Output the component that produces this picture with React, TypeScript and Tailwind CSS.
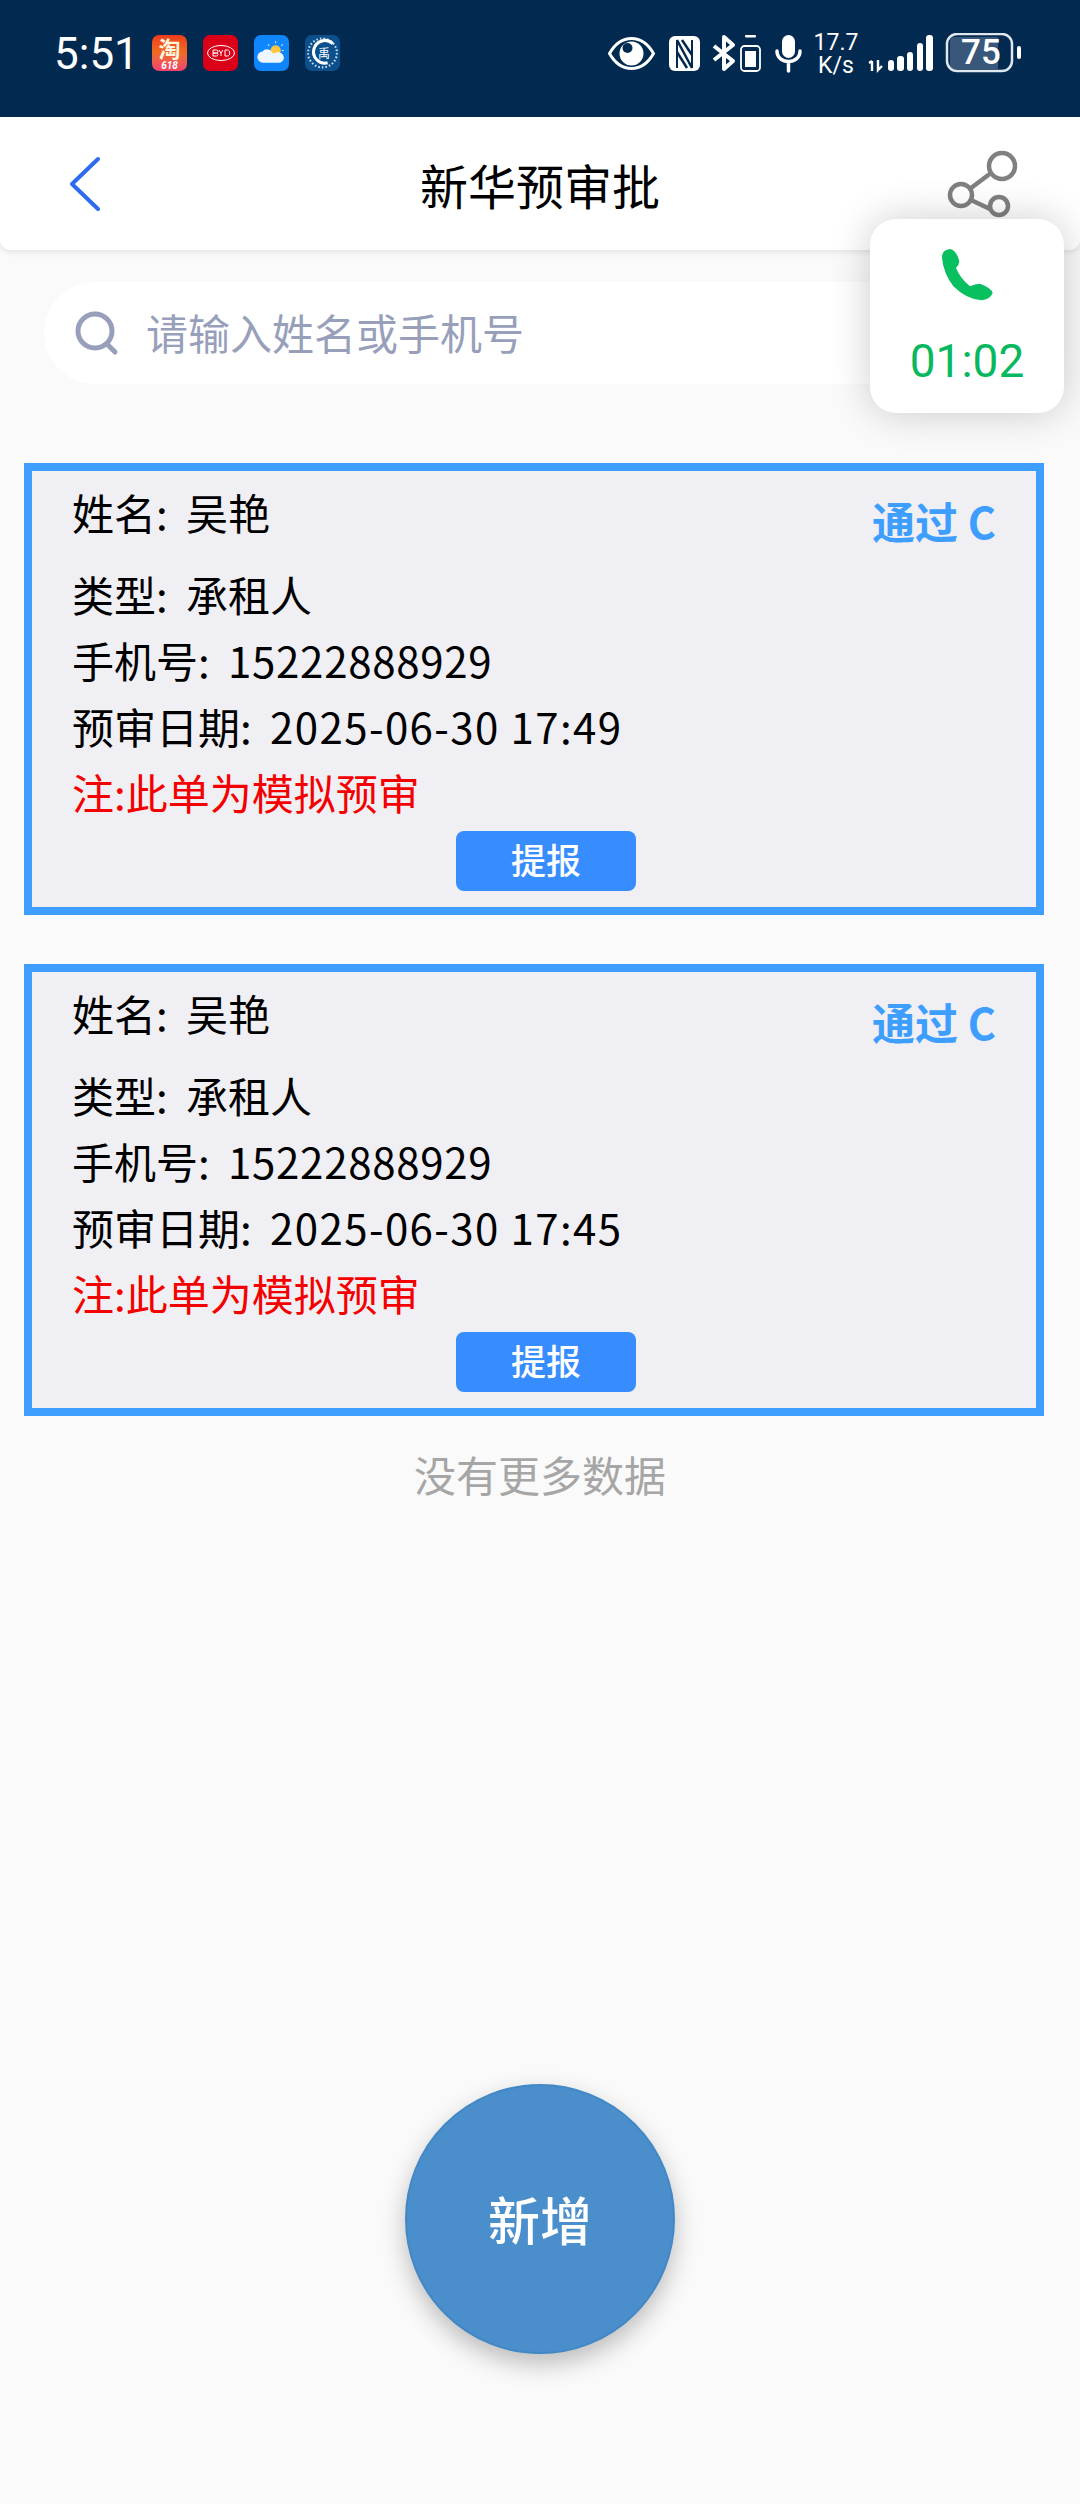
const CJK = { fontFamily: '"Noto Sans CJK SC", "Noto Sans", sans-serif' };

function AppIcon({ className, children }: { className: string; children?: React.ReactNode }) {
  return <div className={`w-[35px] h-[36px] rounded-[7px] relative flex items-center justify-center ${className}`}>{children}</div>;
}

function StatusBar() {
  return (
    <div className="h-[117px] bg-[#02294f] flex items-start text-white relative shrink-0">
      <div className="flex items-center pl-[54px] pt-[33px] h-[72px]">
        <span className="text-[44px] leading-none font-normal w-[98px] mt-[3px]" style={{ fontFamily: 'Roboto, sans-serif' }}>5:51</span>
        <div className="flex gap-[16px]">
          <AppIcon className="bg-gradient-to-b from-[#ee3a1c] via-[#f06a22] to-[#f0426c]">
            <span className="absolute top-0 text-[22px] leading-[25px] font-bold text-[#fff4df]" style={CJK}>淘</span>
            <span className="absolute bottom-0 text-[10px] leading-[10px] italic font-bold" style={{ fontFamily: 'Roboto, sans-serif' }}>618</span>
          </AppIcon>
          <AppIcon className="bg-[#d90018]">
            <svg width="30" height="18" viewBox="0 0 30 18"><ellipse cx="15" cy="9" rx="13.5" ry="7.5" fill="none" stroke="#fff" strokeWidth="1" /><path d="M7 6h3.500a1.500 1.500 0 0 1 0 3H7zm0 3h3.500a1.500 1.500 0 0 1 0 3H7zM13 6l2 3 2-3M15 9v3M19 6h2.500c3 0 3 6 0 6H19z" fill="none" stroke="#fff" strokeWidth="1" /></svg>
          </AppIcon>
          <AppIcon className="bg-[#0f86fb]">
            <svg width="35" height="36" viewBox="0 0 34 35"><circle cx="21" cy="15" r="5" fill="#fcc63f" /><path d="M21 6v2M13.500 9l1.300 1.500M28 9l-1.500 1.500M27 15h2" stroke="#cfe6ff" strokeWidth="1" /><path d="M9 27a5.500 5.500 0 0 1-.5-11c1.500-3 6.500-3 8.500 0 1 2 2 2 3 1.500 4-2 9 .5 9 4.500a5 5 0 0 1-5 5z" fill="#eef7ff" /></svg>
          </AppIcon>
          <AppIcon className="bg-[#0b4f8d]">
            <svg width="35" height="36" viewBox="0 0 34 35"><circle cx="17" cy="17.500" r="14" fill="none" stroke="#cfe2f2" strokeWidth="2" strokeDasharray="1.500 2" /><path d="M27 8.500A11 11 0 1 0 22 27" fill="none" stroke="#fff" strokeWidth="3" /></svg>
            <span className="absolute text-[12px] leading-none left-[13px] top-[12px]" style={CJK}>禹</span>
          </AppIcon>
        </div>
      </div>
      <div className="absolute left-[608px] top-[33px] w-[420px] h-[48px]">
        <svg width="420" height="48" viewBox="0 0 420 48" fill="none">
          <path d="M1.500 20.500C8 9 16 5.500 23.500 5.500S39 9 45.500 20.500C39 32 31 35.500 23.500 35.500S8 32 1.500 20.500Z" stroke="#fff" strokeWidth="3" />
          <circle cx="23.500" cy="20.500" r="12" fill="#fff" />
          <circle cx="19.500" cy="15" r="5" fill="#02294f" />
          <rect x="61" y="3" width="31" height="35" rx="6" fill="#fff" />
          <path d="M69 35V7M84 35V7" stroke="#02294f" strokeWidth="2" />
          <path d="M69 7l15 28M74 7l10 15M69 19l10 16" stroke="#02294f" strokeWidth="2.500" />
          <path d="M106 13l19 15-9 8V4l9 8-19 15" stroke="#fff" strokeWidth="4" strokeLinejoin="round" />
          <rect x="133" y="13" width="19" height="25" rx="3.500" stroke="#fff" strokeWidth="1.800" />
          <rect x="137" y="18" width="11" height="16" fill="#fff" />
          <rect x="137" y="2" width="11" height="2.500" rx="1" fill="#fff" />
          <rect x="174" y="2" width="13" height="23" rx="6.500" fill="#fff" />
          <path d="M169 18c0 14 23 14 23 0M180.500 29v9" stroke="#fff" strokeWidth="3.500" strokeLinecap="round" />
          <path d="M264 28v10M261 30l3-2M270 27v10l4-4" stroke="#fff" strokeWidth="2.400" />
          <rect x="280" y="27" width="6" height="11" rx="3" fill="#fff" />
          <rect x="289" y="23" width="7" height="15" rx="3" fill="#fff" />
          <rect x="299" y="19" width="6" height="19" rx="3" fill="#fff" />
          <rect x="309" y="10" width="6" height="28" rx="3" fill="#fff" />
          <rect x="318" y="2" width="7" height="36" rx="3" fill="#fff" />
          <path d="M346 4h44v32h-44a4 4 0 0 1-4-4V8a4 4 0 0 1 4-4z" fill="#39577a" />
          <rect x="339" y="1" width="65" height="37" rx="10" stroke="#dfe6ee" strokeWidth="2.500" />
          <rect x="409" y="13" width="4" height="13" rx="2" fill="#fff" />
        </svg>
        <span className="absolute left-[202px] top-[-2px] text-[23px] leading-[23px] text-center w-[52px]" style={{ fontFamily: 'Roboto, sans-serif' }}>17.7<br />K/s</span>
        <span className="absolute left-[353px] top-[1px] text-[35px] leading-[37px] font-medium" style={{ fontFamily: 'Roboto, sans-serif' }}>75</span>
      </div>
    </div>
  );
}

function Header() {
  return (
    <div className="h-[133px] bg-white rounded-b-[10px] shadow-[0_2px_6px_rgba(0,0,0,0.10)] flex items-center justify-between pl-[68px] pr-[60px] shrink-0 relative">
      <svg width="36" height="56" viewBox="0 0 36 56" fill="none"><path d="M30 3L4 28l26 25" stroke="#2d6bf0" strokeWidth="4" strokeLinecap="round" strokeLinejoin="round" /></svg>
      <span className="absolute left-0 right-0 text-center text-[48px] leading-none text-black" style={CJK}>新华预审批</span>
      <svg width="74" height="74" viewBox="0 0 74 74" fill="none" className="mt-[3px]"><circle cx="56" cy="18" r="13" stroke="#808080" strokeWidth="4.500" /><circle cx="15" cy="47" r="11" stroke="#808080" strokeWidth="4.500" /><circle cx="53" cy="58" r="9" stroke="#808080" strokeWidth="4.500" /><path d="M45 25L25 40M25 52l19 9" stroke="#808080" strokeWidth="4.500" /></svg>
    </div>
  );
}

function Card({ date }: { date: string }) {
  return (
    <div className="ml-[24px] mr-[36px] h-[452px] border-[8px] border-[#3d9efe] bg-[#f0eff4] pl-[40px] pr-[40px] relative text-black text-[42px]" style={CJK}>
      <div className="flex justify-between">
        <div className="leading-[66px] pt-[8px]">姓名: <span className="ml-[9px]">吴艳</span></div>
        <div className="text-[#3d9efe] font-bold leading-[66px] pt-[16px] text-[43px]">通过 C</div>
      </div>
      <div className="mt-[8px] leading-[66px]">类型: <span className="ml-[9px]">承租人</span></div>
      <div className="leading-[66px]">手机号: <span className="ml-[9px] tracking-[0.700px]">15222888929</span></div>
      <div className="leading-[66px]">预审日期: <span className="ml-[9px] tracking-[1.400px]">{date}</span></div>
      <div className="leading-[66px] text-[#f50000]">注:此单为模拟预审</div>
      <div className="flex justify-center mt-[6px] ml-[24px]">
        <div className="w-[180px] h-[60px] rounded-[8px] bg-[#378dfe] text-white text-[35px] font-medium flex items-center justify-center pb-[3px]">提报</div>
      </div>
    </div>
  );
}

export default function App() {
  return (
    <div className="w-[1080px] h-[2504px] bg-[#fafafa] flex flex-col relative overflow-hidden" style={CJK}>
      <StatusBar />
      <Header />
      <div className="ml-[44px] mr-[100px] mt-[32px] h-[102px] bg-white rounded-l-[51px] flex items-center pl-[30px] shrink-0">
        <svg width="46" height="46" viewBox="0 0 46 46" fill="none"><circle cx="21" cy="21" r="17" stroke="#989fbb" strokeWidth="5" /><path d="M33 34l8 8" stroke="#989fbb" strokeWidth="5" strokeLinecap="round" /></svg>
        <span className="ml-[26px] mt-[-4px] text-[42px] text-[#989fbb]">请输入姓名或手机号</span>
      </div>
      <div className="mt-[79px] flex flex-col gap-[49px] shrink-0">
        <Card date="2025-06-30 17:49" />
        <Card date="2025-06-30 17:45" />
      </div>
      <div className="text-center text-[42px] text-[#a6a6a6] leading-[60px] mt-[28px]">没有更多数据</div>
      <div className="flex-1 flex justify-center items-end pb-[150px]">
        <div className="w-[270px] h-[270px] rounded-full bg-[#4a8fcb] border-[2px] border-[#4287c6] shadow-[0_10px_24px_rgba(0,0,0,0.25)] flex items-center justify-center text-white text-[52px] font-medium">新增</div>
      </div>
      <div className="absolute left-[870px] top-[219px] w-[194px] h-[194px] bg-white rounded-[26px] shadow-[0_0_40px_rgba(0,0,0,0.2)] flex flex-col items-center">
        <svg width="54" height="54" viewBox="420 355 162 162" className="mt-[29px]"><path fill="#08c060" d="M426 385Q425 360 450 358Q470 362 478 395Q478 405 468 415Q480 445 510 470Q525 462 540 462Q575 475 578 490Q570 510 545 512Q500 510 460 470Q430 430 426 385Z" /></svg>
        <span className="text-[46px] leading-none mt-[36px] text-[#08b85e]" style={{ fontFamily: 'Roboto, sans-serif' }}>01:02</span>
      </div>
    </div>
  );
}
